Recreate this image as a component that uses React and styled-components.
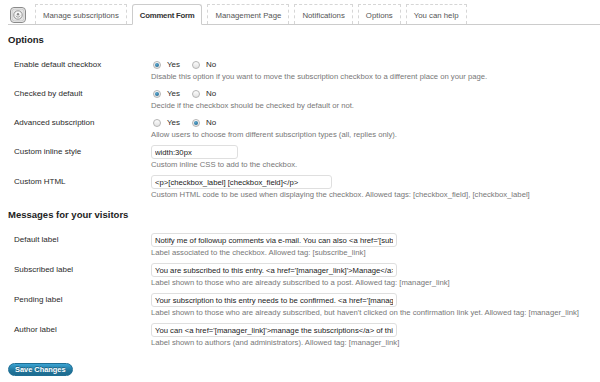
import React from "react";
import styled, { createGlobalStyle } from "styled-components";

const GlobalStyle = createGlobalStyle`
  html, body {
    margin: 0;
    padding: 0;
    background: #fff;
  }
  body {
    font-family: "Liberation Sans", Arial, sans-serif;
    color: #333;
  }
`;

const Page = styled.div`
  width: 600px;
  height: 382px;
  overflow: hidden;
  box-sizing: border-box;
  padding: 4px 0 0 8px;
`;

const TabBar = styled.nav`
  display: flex;
  align-items: flex-end;
  gap: 5px;
  height: 20px;
  border-bottom: 1px solid #ccc;
`;

const TabIcon = styled.span`
  display: flex;
  align-self: flex-end;
  margin: 0 4px 1px 2px;
`;

const Tab = styled.div`
  box-sizing: border-box;
  height: ${(p) => (p.$active ? "21px" : "20px")};
  margin-bottom: ${(p) => (p.$active ? "-1px" : "0")};
  padding: 2px 7px 0;
  line-height: 17px;
  font-size: 7.8px;
  white-space: nowrap;
  color: ${(p) => (p.$active ? "#333" : "#555")};
  font-weight: ${(p) => (p.$active ? "bold" : "normal")};
  letter-spacing: ${(p) => (p.$active ? "-0.25px" : "0")};
  background: #fff;
  border: 1px ${(p) => (p.$active ? "solid #ccc" : "dashed #d6d6d6")};
  border-bottom: ${(p) => (p.$active ? "1px solid #fff" : "none")};
  border-radius: ${(p) => (p.$active ? "3px 3px 0 0" : "0")};
`;

const SectionTitle = styled.h3`
  margin: 8px 0 11px;
  font-size: 9.5px;
  line-height: 14px;
  font-weight: bold;
  color: #222;
`;

const FormTable = styled.div`
  display: flex;
  flex-direction: column;
  gap: 5px;
  padding-left: 6px;
`;

const Row = styled.div`
  display: grid;
  grid-template-columns: 137px 1fr;
`;

const Label = styled.div`
  font-size: 8px;
  line-height: ${(p) => (p.$tall ? "14px" : "13px")};
  color: #2a2a2a;
  white-space: nowrap;
`;

const Field = styled.div`
  display: flex;
  flex-direction: column;
`;

const Hint = styled.div`
  font-size: 7.7px;
  line-height: 11px;
  color: #777;
  white-space: nowrap;
`;

const RadioGroup = styled.div`
  display: flex;
  align-items: center;
  gap: 12px;
  height: 13px;
  padding-left: 2px;
`;

const RadioOption = styled.label`
  display: flex;
  align-items: center;
  gap: 6px;
  font-size: 8px;
  color: #2a2a2a;
`;

const RadioDot = styled.span`
  position: relative;
  width: 8px;
  height: 8px;
  box-sizing: border-box;
  border-radius: 50%;
  border: 1px solid #b4b4b4;
  background: linear-gradient(#fdfdfd, #e2e2e2);
  &::after {
    content: "";
    display: ${(p) => (p.$checked ? "block" : "none")};
    position: absolute;
    left: 1px;
    top: 1px;
    width: 4px;
    height: 4px;
    border-radius: 50%;
    background: radial-gradient(circle at 40% 35%, #5aa6cf, #1a5f86);
  }
`;

const TextField = styled.input`
  display: block;
  box-sizing: border-box;
  width: ${(p) => p.$w}px;
  height: 14px;
  margin: 0;
  padding: 0 3px;
  border: 1px solid #dfdfdf;
  border-radius: 3px;
  background: #fff;
  font: 7.7px "Liberation Sans", Arial, sans-serif;
  color: #1a1a1a;
  outline: none;
`;

const SaveButton = styled.button`
  display: block;
  margin-top: 15px;
  height: 13px;
  padding: 0 6px;
  box-sizing: border-box;
  border: 1px solid #1f6f95;
  border-radius: 11px;
  background: linear-gradient(#3aa3d3, #21759b 60%, #1e6b8e);
  color: #fff;
  font: bold 7.4px/11px "Liberation Sans", Arial, sans-serif;
  text-shadow: 0 -1px 0 rgba(0, 0, 0, 0.3);
  white-space: nowrap;
`;

function PluginIcon() {
  return (
    <svg width="16" height="16" viewBox="0 0 16 16">
      <rect x="0.5" y="0.5" width="15" height="15" rx="3.5" fill="#f4f4f4" stroke="#8a8a8a" />
      <rect x="2" y="2" width="12" height="12" rx="2.5" fill="#e4e4e4" stroke="#c2c2c2" strokeWidth="0.8" />
      <circle cx="8" cy="8" r="4.2" fill="#f7f7f7" stroke="#8a8a8a" strokeWidth="0.9" />
      <circle cx="8" cy="7.2" r="1.2" fill="#8a8a8a" />
      <path d="M5.9 8.6a2.2 2.2 0 0 0 4.2 0" fill="none" stroke="#8a8a8a" strokeWidth="0.8" />
    </svg>
  );
}

const tabs = [
  "Manage subscriptions",
  "Comment Form",
  "Management Page",
  "Notifications",
  "Options",
  "You can help",
];

const radioRows = [
  {
    label: "Enable default checkbox",
    value: "yes",
    hint: "Disable this option if you want to move the subscription checkbox to a different place on your page.",
  },
  {
    label: "Checked by default",
    value: "yes",
    hint: "Decide if the checkbox should be checked by default or not.",
  },
  {
    label: "Advanced subscription",
    value: "no",
    hint: "Allow users to choose from different subscription types (all, replies only).",
  },
];

const textRows = [
  {
    label: "Custom inline style",
    value: "width:30px",
    width: 87,
    hint: "Custom inline CSS to add to the checkbox.",
  },
  {
    label: "Custom HTML",
    value: "<p>[checkbox_label] [checkbox_field]</p>",
    width: 181,
    hint: "Custom HTML code to be used when displaying the checkbox. Allowed tags: [checkbox_field], [checkbox_label]",
  },
];

const messageRows = [
  {
    label: "Default label",
    value:
      "Notify me of followup comments via e-mail. You can also <a href='[subscribe_link]'>subscribe</a> without commenting.",
    hint: "Label associated to the checkbox. Allowed tag: [subscribe_link]",
  },
  {
    label: "Subscribed label",
    value:
      "You are subscribed to this entry. <a href='[manager_link]'>Manage</a> your subscriptions.",
    hint: "Label shown to those who are already subscribed to a post. Allowed tag: [manager_link]",
  },
  {
    label: "Pending label",
    value:
      "Your subscription to this entry needs to be confirmed. <a href='[manager_link]'>Manage your subscriptions</a>.",
    hint: "Label shown to those who are already subscribed, but haven't clicked on the confirmation link yet. Allowed tag: [manager_link]",
  },
  {
    label: "Author label",
    value:
      "You can <a href='[manager_link]'>manage the subscriptions</a> of this entry.",
    hint: "Label shown to authors (and administrators). Allowed tag: [manager_link]",
  },
];

function TextRow({ row, width }) {
  return (
    <Row>
      <Label $tall>{row.label}</Label>
      <Field>
        <TextField $w={width || row.width} defaultValue={row.value} readOnly />
        <Hint>{row.hint}</Hint>
      </Field>
    </Row>
  );
}

export default function App() {
  return (
    <>
      <GlobalStyle />
      <Page>
        <TabBar>
          <TabIcon>
            <PluginIcon />
          </TabIcon>
          {tabs.map((t) => (
            <Tab key={t} $active={t === "Comment Form"}>
              {t}
            </Tab>
          ))}
        </TabBar>

        <SectionTitle>Options</SectionTitle>
        <FormTable>
          {radioRows.map((r) => (
            <Row key={r.label}>
              <Label>{r.label}</Label>
              <Field>
                <RadioGroup>
                  <RadioOption>
                    <RadioDot $checked={r.value === "yes"} />
                    Yes
                  </RadioOption>
                  <RadioOption>
                    <RadioDot $checked={r.value === "no"} />
                    No
                  </RadioOption>
                </RadioGroup>
                <Hint>{r.hint}</Hint>
              </Field>
            </Row>
          ))}
          {textRows.map((r) => (
            <TextRow key={r.label} row={r} />
          ))}
        </FormTable>

        <SectionTitle>Messages for your visitors</SectionTitle>
        <FormTable>
          {messageRows.map((r) => (
            <TextRow key={r.label} row={r} width={246} />
          ))}
        </FormTable>

        <SaveButton>Save Changes</SaveButton>
      </Page>
    </>
  );
}
